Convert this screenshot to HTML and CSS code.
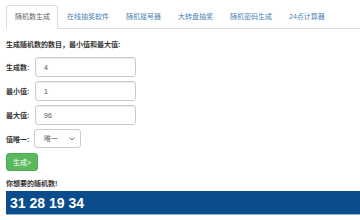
FILE: index.html
```html
<!DOCTYPE html>
<html lang="zh-CN">
<head>
    <meta charset="UTF-8">
    <meta name="viewport" content="width=device-width, initial-scale=1.0">
    <title>随机数生成</title>
    <link rel="stylesheet" href="styles.css">
</head>
<body>
    <div id="random">
        <ul class="tabs">
            <li class="active"><a href="#">随机数生成</a></li>
            <li><a href="#">在线抽奖软件</a></li>
            <li><a href="#">随机摇号器</a></li>
            <li><a href="#">大转盘抽奖</a></li>
            <li><a href="#">随机密码生成</a></li>
            <li><a href="#">24点计算器</a></li>
        </ul>
        <p class="intro">生成随机数的数目，最小值和最大值:</p>
        <div class="row">
            <label>生成数:</label>
            <input type="text" class="textfield" value="4" />
        </div>
        <div class="row">
            <label>最小值:</label>
            <input type="text" class="textfield" value="1" />
        </div>
        <div class="row">
            <label>最大值:</label>
            <input type="text" class="textfield" value="96" />
        </div>
        <div class="row row-select">
            <label>值唯一:</label>
            <select class="select">
                <option>唯一</option>
                <option>可重复</option>
            </select>
        </div>
        <button class="btn">生成&gt;</button>
        <p class="tip">你想要的随机数!</p>
        <div class="result">31 28 19 34</div>
    </div>
</body>
</html>
```
FILE: styles.css
```css
body{
    margin:0;
    font-family:"Liberation Sans","Noto Sans CJK SC",sans-serif;
    font-size:7px;
    color:#333;
    background:#fff;
}
#random{
    padding:5px 0 0 6px;
}
#random .tabs{
    display:flex;
    margin:0;
    padding:0;
    list-style:none;
    border-bottom:1px solid #ddd;
}
#random .tabs li{
    flex-shrink:0;
    margin-bottom:-1px;
}
#random .tabs a{
    display:block;
    padding:0 7px 0 8px;
    height:22px;
    line-height:22px;
    white-space:nowrap;
    color:#4a7fb5;
    text-decoration:none;
    border:1px solid transparent;
    border-radius:3px 3px 0 0;
}
#random .tabs .active a{
    color:#666;
    background:#fff;
    border-color:#ddd #ddd transparent;
}
#random .intro{
    margin:11px 0 0;
    font-weight:bold;
    line-height:10px;
}
#random .row{
    display:flex;
    align-items:center;
    margin-top:7px;
}
#random .row + .row{margin-top:4px;}
#random .row label{
    width:29px;
    font-weight:bold;
}
#random .textfield{
    box-sizing:border-box;
    width:101px;
    height:20px;
    padding:0 8px;
    font:7px "Liberation Sans",sans-serif;
    color:#555;
    border:1px solid #ccc;
    border-radius:3px;
    box-shadow:inset 0 1px 1px rgba(0,0,0,.075);
}
#random .row-select{margin-top:8px;}
#random .row-select label{width:28px;}
#random .select{
    -webkit-appearance:none;
    appearance:none;
    box-sizing:border-box;
    width:47px;
    height:19px;
    padding:0 4px 0 9px;
    font:7px "Liberation Sans","Noto Sans CJK SC",sans-serif;
    color:#555;
    background:#fff url("data:image/svg+xml,%3Csvg xmlns='http://www.w3.org/2000/svg' width='6' height='4' viewBox='0 0 6 4'%3E%3Cpath d='M0.5 0.5 L3 3 L5.5 0.5' fill='none' stroke='%23666' stroke-width='0.9'/%3E%3C/svg%3E") no-repeat right 5px center;
    border:1px solid #ccc;
    border-radius:3px;
}
#random .btn{
    display:block;
    margin-top:5px;
    height:18px;
    padding:0 6px;
    font:7px "Liberation Sans","Noto Sans CJK SC",sans-serif;
    color:#fff;
    background:#5cb85c;
    border:1px solid #4cae4c;
    border-radius:3px;
}
#random .tip{
    margin:8px 0 0;
    font-weight:bold;
    line-height:10px;
}
#random .result{
    margin-top:2px;
    height:23px;
    line-height:24px;
    padding-left:4px;
    font-size:14px;
    font-weight:bold;
    color:#fff;
    background:#0b4d8c;
    border-bottom:1px solid #8fb3d3;
}
```
